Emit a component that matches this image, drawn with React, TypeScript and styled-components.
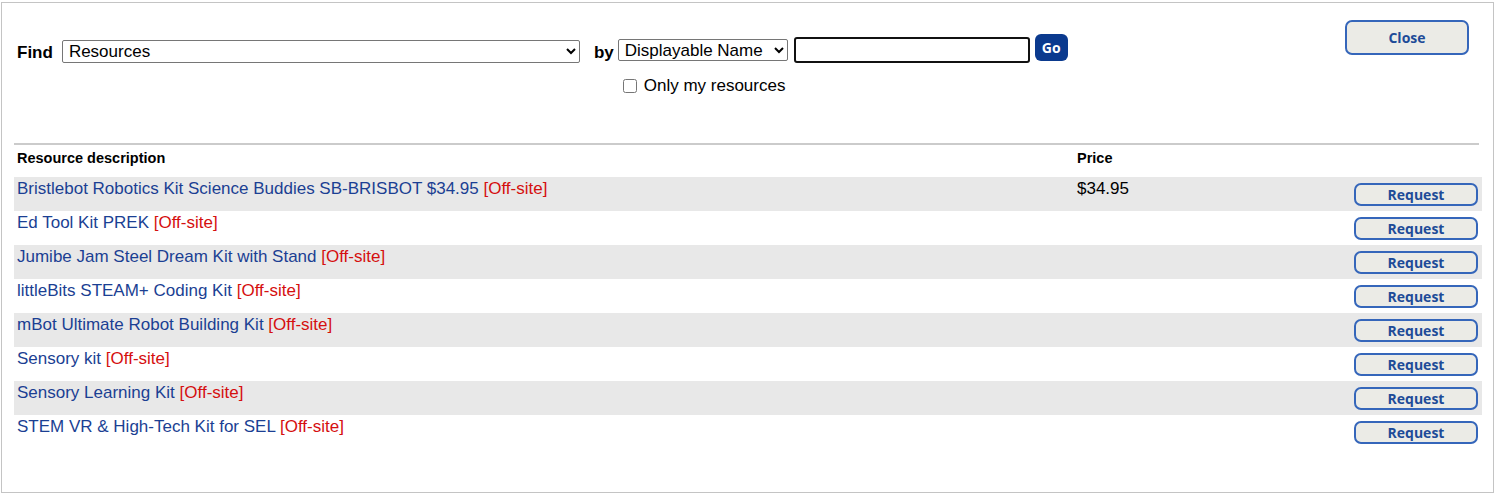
import React from 'react'
import styled, { createGlobalStyle } from 'styled-components'

const GlobalStyle = createGlobalStyle`
  html, body {
    margin: 0;
    padding: 0;
    background: #fff;
    font-family: "Liberation Sans", Arial, sans-serif;
  }
`

type Resource = {
  name: string
  price?: string
}

const resources: Resource[] = [
  { name: 'Bristlebot Robotics Kit Science Buddies SB-BRISBOT $34.95', price: '$34.95' },
  { name: 'Ed Tool Kit PREK' },
  { name: 'Jumibe Jam Steel Dream Kit with Stand' },
  { name: 'littleBits STEAM+ Coding Kit' },
  { name: 'mBot Ultimate Robot Building Kit' },
  { name: 'Sensory kit' },
  { name: 'Sensory Learning Kit' },
  { name: 'STEM VR & High-Tech Kit for SEL' },
]

const Frame = styled.div`
  box-sizing: border-box;
  margin: 2px 0 0 1px;
  width: 1493px;
  height: 491px;
  border: 1px solid #c4c4c4;
  padding: 0 11px 0 12px;
`

const TopBar = styled.div`
  height: 140px;
  box-sizing: border-box;
  padding-top: 17px;
  display: flex;
  align-items: flex-start;
  justify-content: space-between;
`

const SearchForm = styled.div`
  margin-top: 14px;
  padding-left: 3px;
  display: flex;
  align-items: flex-start;
`

const Label = styled.span<{ $gap: number }>`
  font-size: 17px;
  font-weight: bold;
  line-height: 19px;
  margin-top: 9px;
  margin-right: ${(p) => p.$gap}px;
  color: #000;
`

const Select = styled.select<{ $w: number; $h: number }>`
  width: ${(p) => p.$w}px;
  height: ${(p) => p.$h}px;
  box-sizing: border-box;
  font-family: "Liberation Sans", Arial, sans-serif;
  font-size: 17px;
  color: #000;
  background: #fff;
  border: 1px solid #767676;
  border-radius: 2px;
  padding: 0 0 0 2px;
  margin: 0;
`

const FindSelect = styled(Select)`
  margin-top: 6px;
  margin-right: 14px;
`

const QueryColumn = styled.div`
  display: flex;
  flex-direction: column;
`

const QueryRow = styled.div`
  display: flex;
  align-items: flex-end;
  height: 29px;
`

const ByField = styled(Select)`
  margin-right: 6px;
  margin-bottom: 2px;
`

const TextInput = styled.input`
  box-sizing: border-box;
  width: 236px;
  height: 26px;
  border: 2px solid #111;
  border-radius: 3px;
  outline: none;
  margin: 0 5px 0 0;
  padding: 0 3px;
  font-family: "Liberation Sans", Arial, sans-serif;
  font-size: 17px;
`

const GoButton = styled.button`
  box-sizing: border-box;
  width: 33px;
  height: 27px;
  margin: 0 0 2px 0;
  padding: 0;
  border: none;
  border-radius: 6px;
  background: #0b3a8e;
  color: #fff;
  font-family: "Open Sans", sans-serif;
  font-weight: bold;
  font-size: 14px;
  align-self: flex-start;
`

const CheckRow = styled.label`
  display: flex;
  align-items: center;
  margin-top: 13px;
  font-size: 17px;
  line-height: 19px;
  color: #000;
`

const CheckBox = styled.input`
  width: 14px;
  height: 14px;
  margin: 0 7px 0 5px;
`

const PillButton = styled.button<{ $h: number }>`
  box-sizing: border-box;
  width: 124px;
  height: ${(p) => p.$h}px;
  margin: 0;
  padding: 0;
  background: #ebebe6;
  border: 2px solid #3566ba;
  border-radius: 7px;
  color: #1e4b98;
  font-family: "Open Sans", sans-serif;
  font-weight: bold;
  font-size: 14px;
`

const CloseButton = styled(PillButton)`
  margin-right: 13px;
`

const Rule = styled.div`
  height: 2px;
  background: #cbcbcb;
  margin-right: 3px;
`

const Grid = styled.div`
  display: grid;
  grid-template-columns: 1060px 1fr auto;
`

const HeadCell = styled.div`
  height: 32px;
  box-sizing: border-box;
  padding: 5px 3px 0;
  font-size: 14.5px;
  font-weight: bold;
  line-height: 17px;
  color: #000;
`

const Cell = styled.div<{ $shade: boolean; $action?: boolean }>`
  height: 34px;
  box-sizing: border-box;
  padding: ${(p) => (p.$action ? '0 4px 0 0' : '2px 3px 0')};
  background: ${(p) => (p.$shade ? '#e8e8e8' : '#fff')};
  font-size: 17px;
  line-height: 20px;
  color: #000;
  display: ${(p) => (p.$action ? 'flex' : 'block')};
  align-items: center;
  justify-content: flex-end;
`

const ItemLink = styled.a`
  color: #1b3f93;
  text-decoration: none;
`

const OffSite = styled.span`
  color: #d50f0f;
`

export default function App() {
  return (
    <>
      <GlobalStyle />
      <Frame>
        <TopBar>
          <SearchForm>
            <Label $gap={9}>Find</Label>
            <FindSelect $w={518} $h={23} defaultValue="Resources">
              <option>Resources</option>
            </FindSelect>
            <Label $gap={4}>by</Label>
            <QueryColumn>
              <QueryRow>
                <ByField $w={170} $h={22} defaultValue="Displayable Name">
                  <option>Displayable Name</option>
                </ByField>
                <TextInput type="text" />
                <GoButton>Go</GoButton>
              </QueryRow>
              <CheckRow>
                <CheckBox type="checkbox" />
                Only my resources
              </CheckRow>
            </QueryColumn>
          </SearchForm>
          <CloseButton $h={35}>Close</CloseButton>
        </TopBar>
        <Rule />
        <Grid>
          <HeadCell>Resource description</HeadCell>
          <HeadCell>Price</HeadCell>
          <HeadCell />
          {resources.map((r, i) => {
            const shade = i % 2 === 0
            return (
              <React.Fragment key={r.name}>
                <Cell $shade={shade}>
                  <ItemLink href="#">{r.name}</ItemLink> <OffSite>[Off-site]</OffSite>
                </Cell>
                <Cell $shade={shade}>{r.price ?? ''}</Cell>
                <Cell $shade={shade} $action>
                  <PillButton $h={23}>Request</PillButton>
                </Cell>
              </React.Fragment>
            )
          })}
        </Grid>
      </Frame>
    </>
  )
}
